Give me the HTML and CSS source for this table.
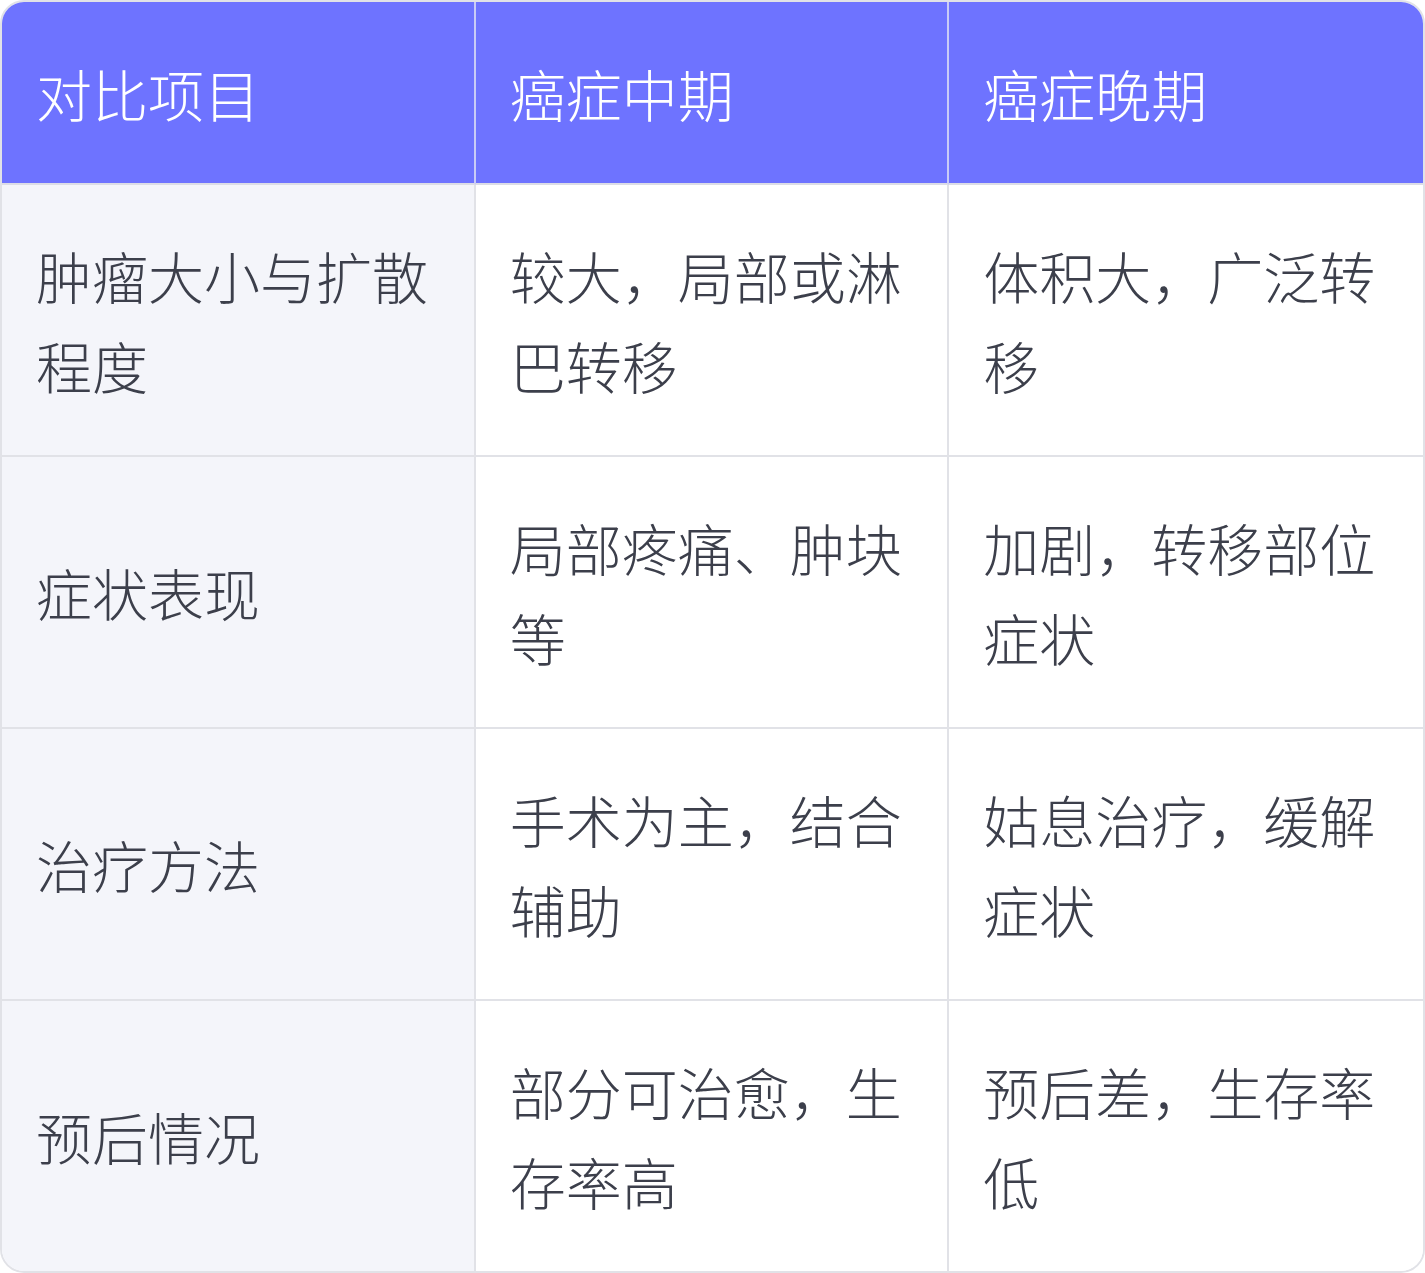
FILE: index.html
```html
<!DOCTYPE html>
<html lang="zh">
<head>
<meta charset="utf-8">
<link rel="stylesheet" href="styles.css">
</head>
<body>
<table class="cmp">
  <thead>
    <tr>
      <th>对比项目</th>
      <th>癌症中期</th>
      <th>癌症晚期</th>
    </tr>
  </thead>
  <tbody>
    <tr>
      <td class="label">肿瘤大小与扩散程度</td>
      <td>较大，局部或淋巴转移</td>
      <td>体积大，广泛转移</td>
    </tr>
    <tr>
      <td class="label">症状表现</td>
      <td>局部疼痛、肿块等</td>
      <td>加剧，转移部位症状</td>
    </tr>
    <tr>
      <td class="label">治疗方法</td>
      <td>手术为主，结合辅助</td>
      <td>姑息治疗，缓解症状</td>
    </tr>
    <tr>
      <td class="label">预后情况</td>
      <td>部分可治愈，生存率高</td>
      <td>预后差，生存率低</td>
    </tr>
  </tbody>
</table>
</body>
</html>
```

FILE: styles.css
```css
html, body {
  margin: 0;
  padding: 0;
  background: #ffffff;
}

.cmp {
  width: 1425px;
  table-layout: fixed;
  border-collapse: separate;
  border-spacing: 0;
  border: 2px solid #e1e2e7;
  border-radius: 24px;
  overflow: hidden;
  font-family: "Noto Sans CJK SC", "Noto Sans", sans-serif;
  font-size: 56px;
  font-weight: 300;
  line-height: 90px;
  color: #3c3f4b;
}

.cmp th,
.cmp td {
  text-align: left;
  vertical-align: middle;
  padding: 0 36px 0 34px;
  font-weight: 300;
  border-right: 2px solid #e1e2e7;
  border-bottom: 2px solid #e1e2e7;
}

.cmp th:last-child,
.cmp td:last-child {
  border-right: none;
}

.cmp tbody tr:last-child td {
  border-bottom: none;
}

.cmp th {
  height: 181px;
  background: #6e73ff;
  color: #ffffff;
  border-right-color: #c9cbf6;
  border-bottom-color: #dcdde6;
}

.cmp th:last-child {
  border-right: none;
}

.cmp td {
  height: 270px;
  background: #ffffff;
}

.cmp td.label {
  background: #f4f5fa;
}
```
